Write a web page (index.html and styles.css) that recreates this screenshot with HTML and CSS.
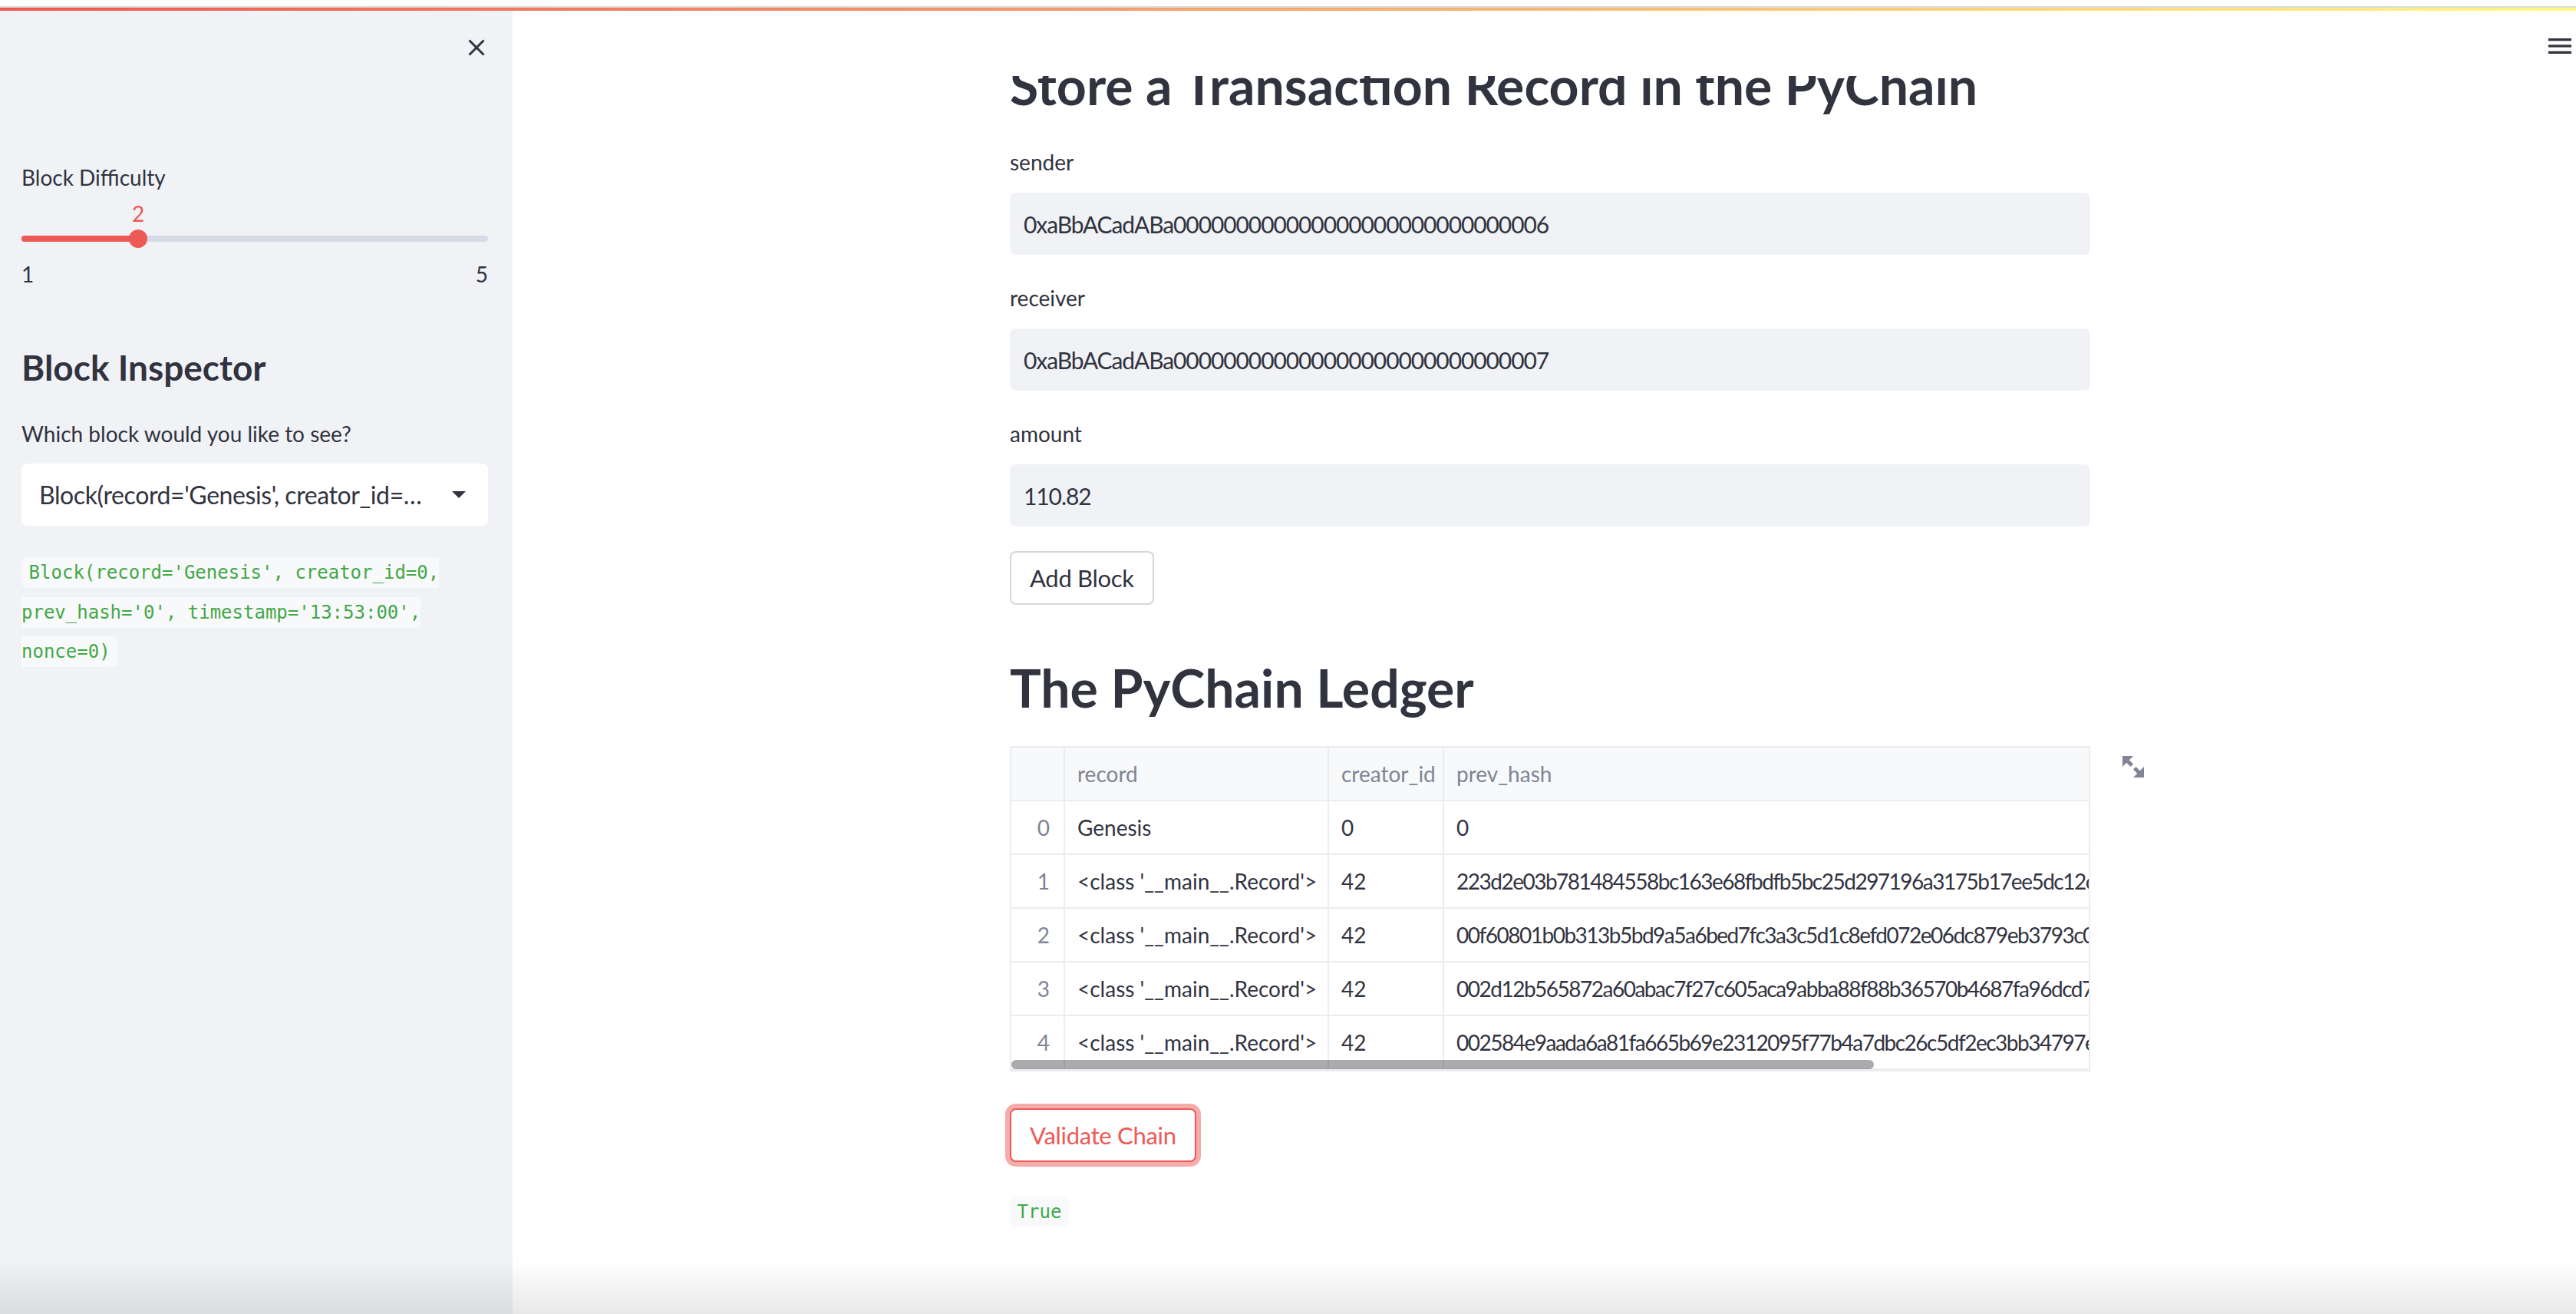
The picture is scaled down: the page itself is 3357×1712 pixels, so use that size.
FILE: index.html
```html
<!DOCTYPE html>
<html lang="en">
<head>
<meta charset="utf-8">
<title>PyChain</title>
<link rel="stylesheet" href="styles.css">
</head>
<body>
<div class="chrome"></div>
<div class="decoration"></div>
<div class="app">
  <aside class="sidebar">
    <div class="sb-top">
      <button class="close-btn" aria-label="Close sidebar">
        <svg viewBox="0 0 22 22" width="22" height="22"><path d="M1.5 1.5 L20.5 20.5 M20.5 1.5 L1.5 20.5" stroke="#31333f" stroke-width="3" fill="none"/></svg>
      </button>
    </div>
    <div class="sb-content">
      <div class="widget-label">Block Difficulty</div>
      <div class="slider">
        <div class="track-wrap">
          <div class="track"><div class="track-fill"></div></div>
          <div class="thumb"><span class="thumb-value">2</span></div>
        </div>
        <div class="ticks"><span>1</span><span>5</span></div>
      </div>
      <h2 class="sb-heading">Block Inspector</h2>
      <div class="widget-label label-gap">Which block would you like to see?</div>
      <div class="select">
        <span class="select-value">Block(record='Genesis', creator_id=0, prev_hash='0', timestamp='13:53:00', nonce=0)</span>
        <svg class="caret" viewBox="0 0 18 9" width="18" height="9"><path d="M0 0 H18 L9 9 Z" fill="#31333f"/></svg>
      </div>
      <p class="sb-code"><code>Block(record='Genesis', creator_id=0, prev_hash='0', timestamp='13:53:00', nonce=0)</code></p>
    </div>
  </aside>
  <main class="main">
    <header class="app-header">
      <button class="menu-btn" aria-label="Menu">
        <svg viewBox="0 0 30 20" width="30" height="20"><rect x="0" y="0" width="30" height="3.3" fill="#31333f"/><rect x="0" y="8.3" width="30" height="3.3" fill="#31333f"/><rect x="0" y="16.7" width="30" height="3.3" fill="#31333f"/></svg>
      </button>
    </header>
    <div class="block">
      <h2 class="heading">Store a Transaction Record in the PyChain</h2>
      <div class="field">
        <label class="widget-label">sender</label>
        <div class="input">0xaBbACadABa000000000000000000000000000006</div>
      </div>
      <div class="field">
        <label class="widget-label">receiver</label>
        <div class="input">0xaBbACadABa000000000000000000000000000007</div>
      </div>
      <div class="field">
        <label class="widget-label">amount</label>
        <div class="input">110.82</div>
      </div>
      <button class="btn">Add Block</button>
      <h2 class="heading heading-ledger">The PyChain Ledger</h2>
      <div class="table-box">
        <div class="table-wrap">
          <table class="ledger">
            <colgroup><col class="c-idx"><col class="c-rec"><col class="c-cre"><col class="c-hash"></colgroup>
            <thead>
              <tr><th></th><th>record</th><th>creator_id</th><th>prev_hash</th></tr>
            </thead>
            <tbody>
              <tr><td class="idx">0</td><td>Genesis</td><td>0</td><td class="hash">0</td></tr>
              <tr><td class="idx">1</td><td>&lt;class '__main__.Record'&gt;</td><td>42</td><td class="hash">223d2e03b781484558bc163e68fbdfb5bc25d297196a3175b17ee5dc12c</td></tr>
              <tr><td class="idx">2</td><td>&lt;class '__main__.Record'&gt;</td><td>42</td><td class="hash">00f60801b0b313b5bd9a5a6bed7fc3a3c5d1c8efd072e06dc879eb3793c0</td></tr>
              <tr><td class="idx">3</td><td>&lt;class '__main__.Record'&gt;</td><td>42</td><td class="hash">002d12b565872a60abac7f27c605aca9abba88f88b36570b4687fa96dcd7</td></tr>
              <tr><td class="idx">4</td><td>&lt;class '__main__.Record'&gt;</td><td>42</td><td class="hash">002584e9aada6a81fa665b69e2312095f77b4a7dbc26c5df2ec3bb34797e</td></tr>
            </tbody>
          </table>
          <div class="scroll-thumb"></div>
        </div>
        <button class="expand-btn" aria-label="View fullscreen">
          <svg viewBox="0 0 8 8" width="28" height="28"><path d="M0 0v4l1.5-1.5 1.5 1.5 1-1-1.5-1.5 1.5-1.5h-4zm5 4l-1 1 1.5 1.5-1.5 1.5h4v-4l-1.5 1.5-1.5-1.5z" fill="#808495"/></svg>
        </button>
      </div>
      <button class="btn btn-focus">Validate Chain</button>
      <p class="result"><code>True</code></p>
    </div>
  </main>
</div>
<div class="bottom-shade"></div>
</body>
</html>
```
FILE: styles.css
```css
* { box-sizing: border-box; }
html, body { margin: 0; height: 100%; }
body {
  font-family: Lato, "Noto Sans", sans-serif;
  color: #31333f;
  background: #fff;
  overflow: hidden;
}
.chrome { height: 10px; background: #fff; border-bottom: 2px solid #dcdcdc; }
.decoration { height: 4px; background: linear-gradient(90deg, #ee5853, #fff884); }
.app { display: flex; height: 1698px; }

/* Sidebar */
.sidebar { width: 668px; flex: none; background: #f0f2f6; }
.sb-top { height: 193px; display: flex; justify-content: flex-end; align-items: flex-start; padding: 37px 36px 0 0; }
.close-btn { border: none; background: none; padding: 0; width: 22px; height: 22px; display: block; }
.close-btn svg { display: block; }
.sb-content { padding: 0 32px 0 28px; }
.widget-label { display: block; font-size: 28px; line-height: 48px; height: 48px; white-space: nowrap; }
.slider { padding-top: 44px; }
.track-wrap { position: relative; height: 24px; display: flex; align-items: center; }
.track { width: 100%; height: 8px; border-radius: 4px; background: #d5dae5; overflow: hidden; }
.track-fill { width: 152px; height: 100%; background: #ed5a56; }
.thumb { position: absolute; left: 140px; top: 0; width: 24px; height: 24px; border-radius: 50%; background: #ed5a56; }
.thumb-value { position: absolute; bottom: calc(100% + 5px); left: 50%; transform: translateX(-50%); font-size: 28px; line-height: 32px; color: #ed5a56; }
.ticks { display: flex; justify-content: space-between; margin-top: 18px; font-size: 28px; line-height: 32px; }
.sb-heading { margin: 78px 0 0; font-size: 46px; font-weight: 700; line-height: 55px; }
.label-gap { margin-top: 35px; }
.select { margin-top: 15px; height: 81px; background: #fff; border-radius: 8px; display: flex; align-items: center; padding: 0 29px 0 23px; }
.select-value { flex: 1; min-width: 0; white-space: nowrap; overflow: hidden; text-overflow: ellipsis; font-size: 32px; letter-spacing: -0.4px; margin-right: 30px; }
.caret { flex: none; display: block; }
.sb-code { margin: 31px 0 0; font-size: 32px; line-height: 51.5px; }
code {
  font-family: "DejaVu Sans Mono", "Liberation Mono", monospace;
  font-size: 24px;
  line-height: 1;
  color: #43a747;
  background: #f8f9fb;
  padding: 6px 9.6px;
  border-radius: 8px;
}

/* Main */
.main { flex: 1; position: relative; overflow: hidden; padding-left: 15px; }
.app-header { position: absolute; top: 0; left: 0; right: 0; height: 85px; background: #fff; z-index: 2; display: flex; justify-content: flex-end; align-items: flex-start; padding: 36px 6px 0 0; }
.menu-btn { border: none; background: none; padding: 0; display: block; }
.menu-btn svg { display: block; }
.block { width: 1408px; margin: 0 auto; padding-top: 53px; display: flex; flex-direction: column; gap: 32px; }
.heading { margin: 0; font-size: 68px; font-weight: 700; line-height: 88px; white-space: nowrap; }
.heading-ledger { margin-top: 32px; }
.field .widget-label { margin-bottom: 16px; }
.input { height: 81px; background: #f0f2f6; border-radius: 8px; padding: 0 18px; display: flex; align-items: center; font-size: 30px; letter-spacing: -1.1px; }
.btn {
  align-self: flex-start;
  height: 70px;
  padding: 0 24px;
  border: 2px solid rgba(49, 51, 63, 0.2);
  border-radius: 8px;
  background: #fff;
  font-family: inherit;
  font-size: 31px;
  letter-spacing: -0.3px;
  color: #31333f;
}
.btn-focus { margin-top: 16px; border-color: #ed5a56; color: #ed5a56; box-shadow: 0 0 0 6px rgba(237, 90, 86, 0.5); }

/* Table */
.table-box { position: relative; }
.table-wrap { position: relative; border: 2px solid #eaecf0; overflow: hidden; height: 424px; }
.ledger { border-collapse: separate; border-spacing: 0; table-layout: fixed; width: 2964px; }
.c-idx { width: 70px; }
.c-rec { width: 344px; }
.c-cre { width: 150px; }
.c-hash { width: 2400px; }
.ledger th, .ledger td {
  border-right: 2px solid #eaecf0;
  border-bottom: 2px solid #eaecf0;
  padding: 0 16px;
  font-size: 28px;
  font-weight: 400;
  text-align: left;
  white-space: nowrap;
  overflow: hidden;
}
.ledger thead tr { height: 70px; }
.ledger tbody tr { height: 70px; }
.ledger th { background: #f8f9fb; color: #808495; }
.ledger td.idx { text-align: right; color: #808495; padding: 0 18px 0 0; }
.ledger td.hash { letter-spacing: -1.5px; }
.scroll-thumb { position: absolute; left: 0; bottom: 1px; width: 1124px; height: 12px; border-radius: 6px; background: rgba(0, 0, 10, 0.33); }
.expand-btn { position: absolute; left: calc(100% + 42px); top: 13px; border: none; background: none; padding: 0; }
.expand-btn svg { display: block; }
.result { margin: 3px 0 0; font-size: 32px; line-height: 51.2px; }

.bottom-shade { position: fixed; left: 0; right: 0; bottom: 0; height: 70px; background: linear-gradient(rgba(0,0,0,0), rgba(0,0,0,0.09)); pointer-events: none; }
```
